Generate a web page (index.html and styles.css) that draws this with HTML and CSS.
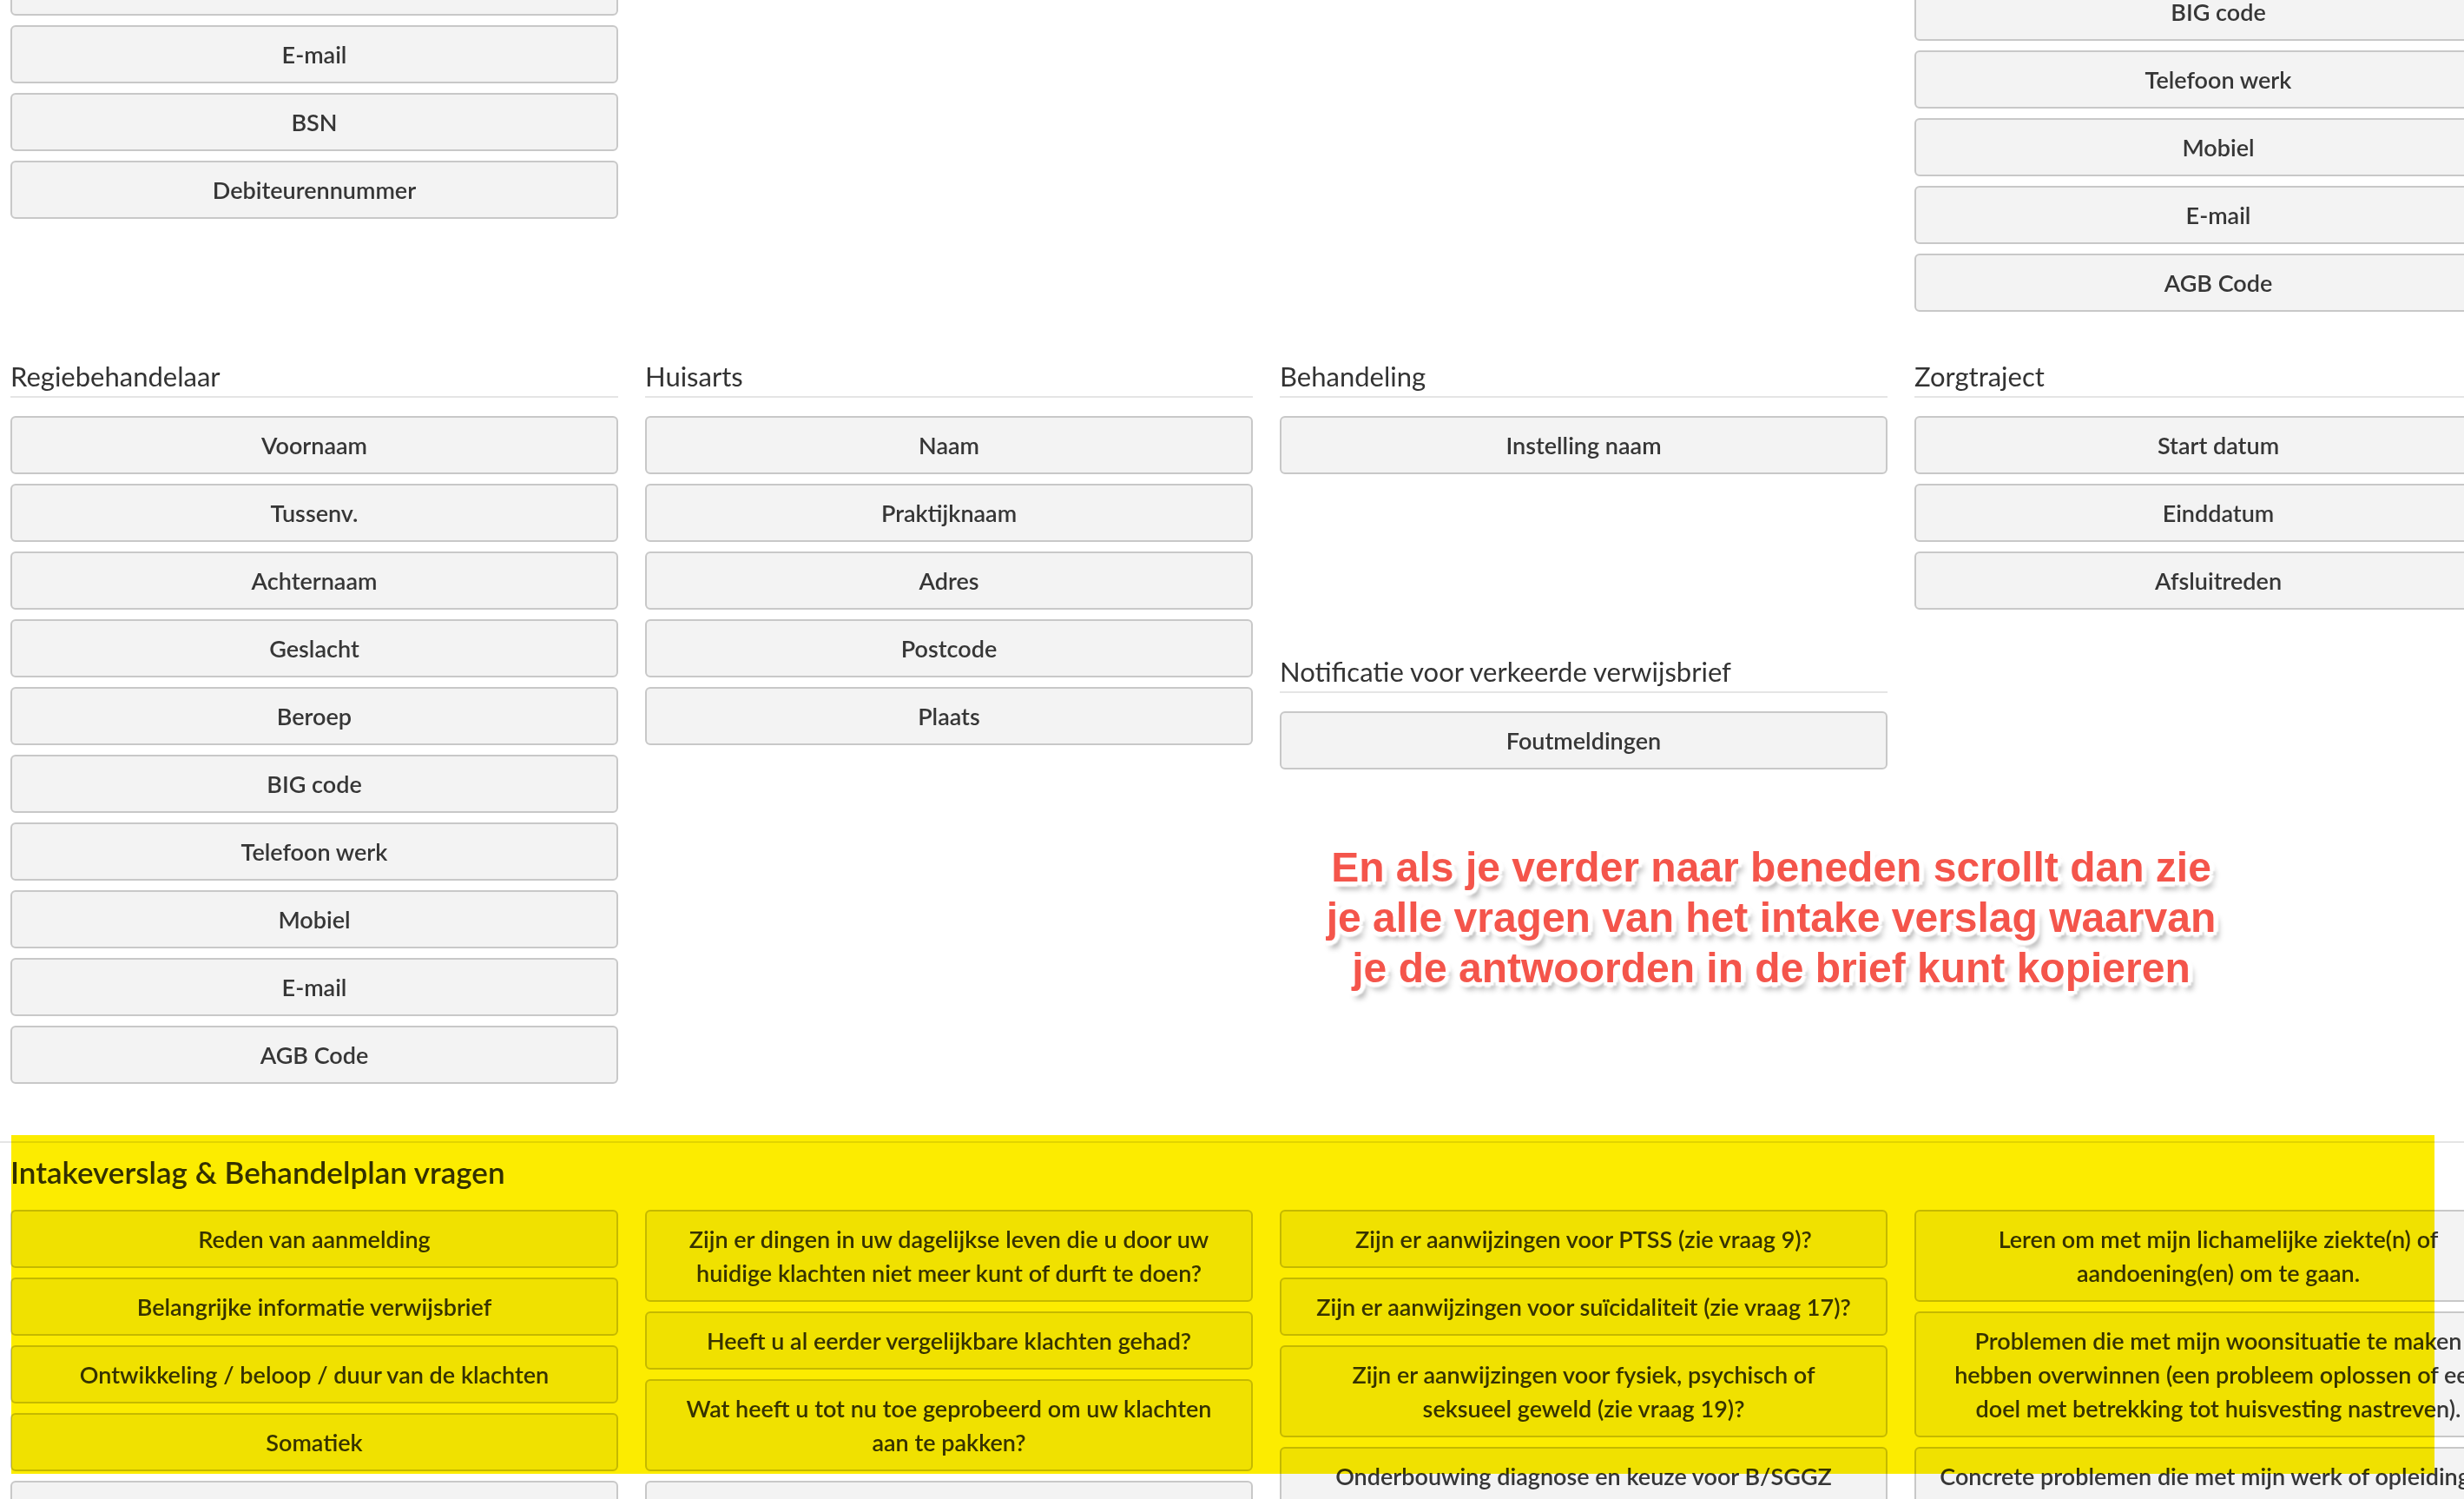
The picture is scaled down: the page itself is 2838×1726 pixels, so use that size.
FILE: index.html
```html
<!DOCTYPE html>
<html lang="nl">
<head>
	<meta charset="UTF-8">
	<meta name="viewport" content="width=device-width, initial-scale=1.0">
	<title>Brief velden</title>
	<link rel="stylesheet" href="styles.css">
</head>
<body>
	<div class="page">
		<div class="row row-top">
			<div class="col">
				<div class="field-list">
					<button class="field">Mobiel</button>
					<button class="field">E-mail</button>
					<button class="field">BSN</button>
					<button class="field">Debiteurennummer</button>
				</div>
			</div>
			<div class="col"></div>
			<div class="col"></div>
			<div class="col col-shift">
				<div class="field-list">
					<button class="field">BIG code</button>
					<button class="field">Telefoon werk</button>
					<button class="field">Mobiel</button>
					<button class="field">E-mail</button>
					<button class="field">AGB Code</button>
				</div>
			</div>
		</div>

		<div class="row row-groups">
			<div class="col">
				<h4 class="group-title">Regiebehandelaar</h4>
				<div class="field-list">
					<button class="field">Voornaam</button>
					<button class="field">Tussenv.</button>
					<button class="field">Achternaam</button>
					<button class="field">Geslacht</button>
					<button class="field">Beroep</button>
					<button class="field">BIG code</button>
					<button class="field">Telefoon werk</button>
					<button class="field">Mobiel</button>
					<button class="field">E-mail</button>
					<button class="field">AGB Code</button>
				</div>
			</div>
			<div class="col">
				<h4 class="group-title">Huisarts</h4>
				<div class="field-list">
					<button class="field">Naam</button>
					<button class="field">Praktijknaam</button>
					<button class="field">Adres</button>
					<button class="field">Postcode</button>
					<button class="field">Plaats</button>
				</div>
			</div>
			<div class="col">
				<h4 class="group-title">Behandeling</h4>
				<div class="field-list">
					<button class="field">Instelling naam</button>
				</div>
				<h4 class="group-title group-notice">Notificatie voor verkeerde verwijsbrief</h4>
				<div class="field-list">
					<button class="field">Foutmeldingen</button>
				</div>
			</div>
			<div class="col">
				<h4 class="group-title">Zorgtraject</h4>
				<div class="field-list">
					<button class="field">Start datum</button>
					<button class="field">Einddatum</button>
					<button class="field">Afsluitreden</button>
				</div>
			</div>
		</div>
	</div>

	<section class="questions">
		<div class="highlight"></div>
		<h3 class="questions-title">Intakeverslag &amp; Behandelplan vragen</h3>
		<div class="row">
			<div class="col">
				<div class="field-list">
					<button class="field">Reden van aanmelding</button>
					<button class="field">Belangrijke informatie verwijsbrief</button>
					<button class="field">Ontwikkeling / beloop / duur van de klachten</button>
					<button class="field">Somatiek</button>
					<button class="field">Psychiatrische voorgeschiedenis</button>
				</div>
			</div>
			<div class="col">
				<div class="field-list">
					<button class="field">Zijn er dingen in uw dagelijkse leven die u door uw huidige klachten niet meer kunt of durft te doen?</button>
					<button class="field">Heeft u al eerder vergelijkbare klachten gehad?</button>
					<button class="field">Wat heeft u tot nu toe geprobeerd om uw klachten aan te pakken?</button>
					<button class="field">Middelengebruik</button>
				</div>
			</div>
			<div class="col">
				<div class="field-list">
					<button class="field">Zijn er aanwijzingen voor PTSS (zie vraag 9)?</button>
					<button class="field">Zijn er aanwijzingen voor suïcidaliteit (zie vraag 17)?</button>
					<button class="field">Zijn er aanwijzingen voor fysiek, psychisch of seksueel&nbsp;geweld (zie vraag 19)?</button>
					<button class="field">Onderbouwing diagnose en keuze voor B/SGGZ</button>
				</div>
			</div>
			<div class="col">
				<div class="field-list">
					<button class="field">Leren om met mijn lichamelijke ziekte(n) of aandoening(en) om te gaan.</button>
					<button class="field">Problemen die met mijn woonsituatie te maken hebben overwinnen (een probleem oplossen of een doel met betrekking tot huisvesting nastreven).</button>
					<button class="field">Concrete problemen die met mijn werk of opleiding te maken hebben overwinnen.</button>
				</div>
			</div>
		</div>
	</section>

	<div class="callout">
		En als je verder naar beneden scrollt dan zie<br>
		je alle vragen van het intake verslag waarvan<br>
		je de antwoorden in de brief kunt kopieren
	</div>
</body>
</html>
```

FILE: styles.css
```css
html {
	overflow: hidden;
}

body {
	margin: 0;
	font-family: Lato, "Open Sans", sans-serif;
	color: #333;
	background: #fff;
}

.page {
	padding: 0 12px;
	margin-top: -49px;
}

.row {
	display: grid;
	grid-template-columns: repeat(4, 700px);
	column-gap: 31px;
	align-items: start;
}

.col-shift {
	padding-top: 29px;
}

.row-groups {
	margin-top: 54px;
}

.field-list {
	display: flex;
	flex-direction: column;
	gap: 11px;
}

.field {
	display: block;
	width: 100%;
	margin: 0;
	padding: 12px 27px;
	font-family: inherit;
	font-size: 27px;
	font-weight: 600;
	line-height: 39px;
	color: #363636;
	text-align: center;
	background: #f3f3f3;
	border: 2px solid #c8c8c8;
	border-radius: 6px;
	cursor: pointer;
}

.group-title {
	margin: 0 0 21px;
	padding-bottom: 3px;
	font-size: 31px;
	font-weight: 400;
	line-height: 40px;
	color: #333;
	border-bottom: 2px solid #e5e5e5;
}

.group-notice {
	margin-top: 207px;
}

/* vragen blok */
.questions {
	position: relative;
	margin-top: 66px;
	padding: 13px 12px 0;
	border-top: 2px solid #e5e5e5;
}

.questions-title {
	margin: 0 0 24px;
	font-size: 35px;
	font-weight: 600;
	line-height: 40px;
	color: #333;
}

.highlight {
	position: absolute;
	top: -9px;
	left: 13px;
	width: 2791px;
	height: 390px;
	background: #fcec00;
	mix-blend-mode: multiply;
	pointer-events: none;
	z-index: 2;
}

/* uitleg tekst */
.callout {
	position: absolute;
	top: 970px;
	left: 1440px;
	width: 1200px;
	font-family: "Liberation Sans", Arial, sans-serif;
	font-size: 48px;
	font-weight: bold;
	line-height: 58px;
	text-align: center;
	white-space: nowrap;
	color: #f4554b;
	text-shadow:
		4px 0 0 #fff, -4px 0 0 #fff, 0 4px 0 #fff, 0 -4px 0 #fff,
		3px 3px 0 #fff, -3px -3px 0 #fff, 3px -3px 0 #fff, -3px 3px 0 #fff,
		6px 0 2px #fff, -6px 0 2px #fff, 0 6px 2px #fff, 0 -6px 2px #fff,
		4px 4px 2px #fff, -4px -4px 2px #fff, 4px -4px 2px #fff, -4px 4px 2px #fff,
		5px 8px 7px rgba(0, 0, 0, 0.4);
}
```
